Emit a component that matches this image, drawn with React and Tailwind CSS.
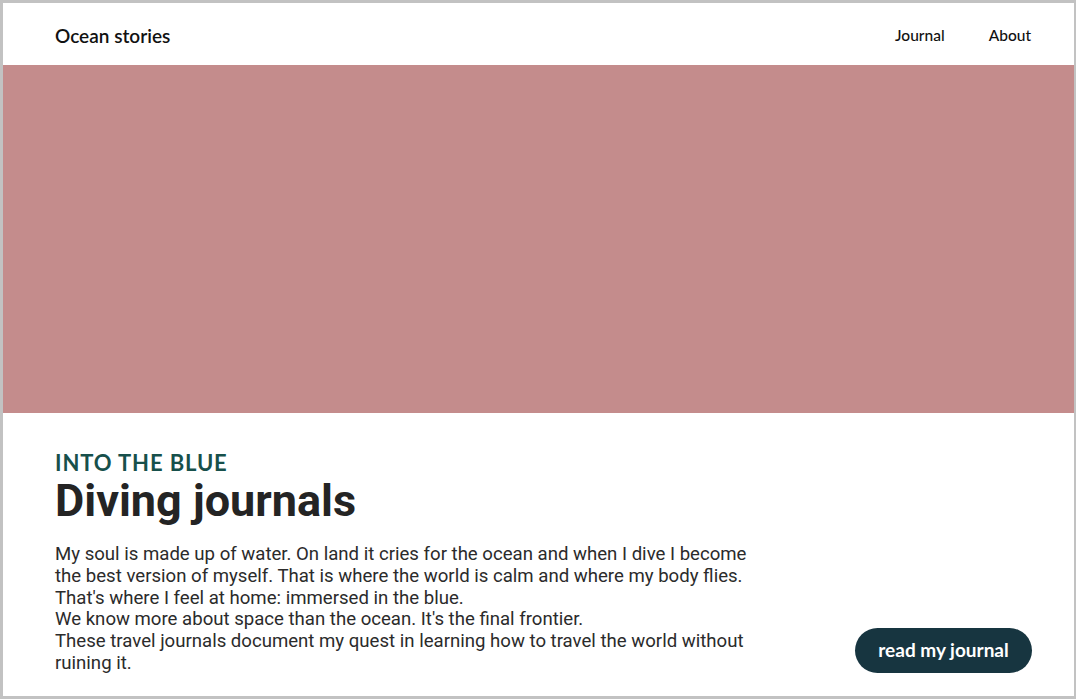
import React from 'react';

const App = () => {
  return (
    <div className="h-screen w-full border-[3px] border-r-2 border-[#c2c2c2] bg-white flex flex-col overflow-hidden">
      <header className="h-[62px] shrink-0 flex items-center justify-between pl-[52px] pr-[43px] pt-[4px]">
        <a href="#" className="text-[19px] font-semibold text-[#111] font-['Lato',sans-serif]">Ocean stories</a>
        <nav className="flex items-center gap-[44px] text-[15.5px] font-medium text-[#111] font-['Lato',sans-serif]">
          <a href="#">Journal</a>
          <a href="#">About</a>
        </nav>
      </header>

      <div className="h-[348px] shrink-0 bg-[#c48c8c]" />

      <section className="flex-1 flex justify-between pl-[52px] pr-[42px] pt-[36px]">
        <div className="flex flex-col">
          <h3 className="text-[22px] leading-[28px] font-bold tracking-[0.04em] text-[#17504b] font-['Lato',sans-serif]">INTO THE BLUE</h3>
          <h1 className="text-[45px] leading-[48px] font-bold text-[#242424] font-['Roboto',sans-serif]">Diving journals</h1>
          <p className="mt-[19px] w-[705px] text-[18.6px] leading-[21.8px] text-[#2b2b2b] font-['Roboto',sans-serif]">
            My soul is made up of water. On land it cries for the ocean and when I dive I become the best version of myself. That is where the world is calm and where my body flies.
            <br />
            That's where I feel at home: immersed in the blue.
            <br />
            We know more about space than the ocean. It's the final frontier.
            <br />
            These travel journals document my quest in learning how to travel the world without ruining it.
          </p>
        </div>
        <button className="self-end mb-[23px] w-[177px] h-[45px] rounded-full bg-[#173540] text-white text-[19px] font-bold font-['Lato',sans-serif]">
          read my journal
        </button>
      </section>
    </div>
  );
};

export default App;
